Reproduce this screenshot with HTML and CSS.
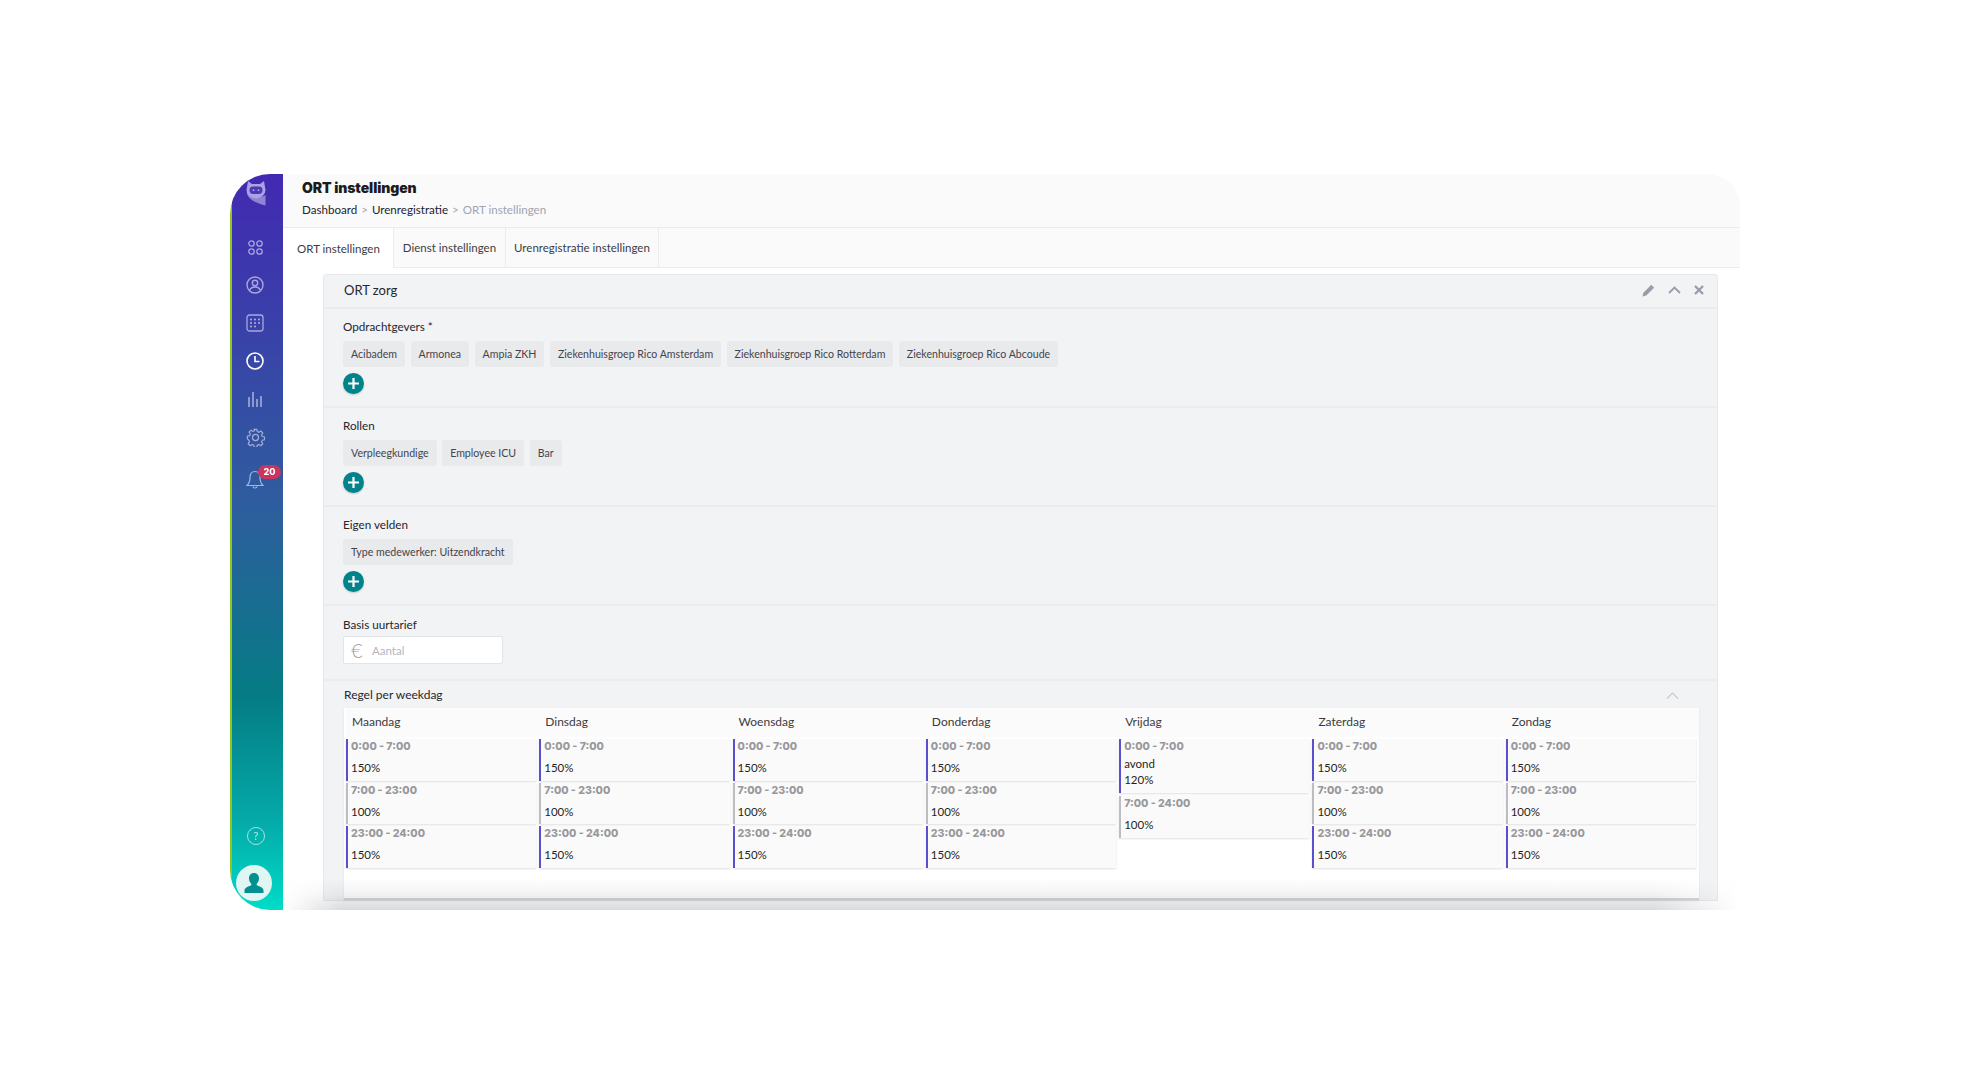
FILE: index.html
```html
<!DOCTYPE html>
<html lang="nl">
<head>
<meta charset="utf-8">
<title>ORT instellingen</title>
<link rel="stylesheet" href="styles.css">
</head>
<body>
<div class="app">
  <aside class="sidebar">
    <svg class="logo" width="24" height="26" viewBox="0 0 24 26">
      <path d="M2.500 12c1 7 9 11 19 13.500V15c-5 4-15 3-19-3z" fill="#8d84d6"/>
      <path d="M4 1l4 3h8l4-3 1.500 9a9.500 8.500 0 0 1-19 0z" fill="#aaa3e3"/>
      <rect x="5.500" y="6.500" width="13" height="7.500" rx="3.700" fill="#4a38b4"/>
      <circle cx="9.500" cy="10.200" r=".9" fill="#b5afe8"/><circle cx="14.500" cy="10.200" r=".9" fill="#b5afe8"/>
    </svg>
    <nav class="nav">
      <a class="nav-item"><svg width="15" height="15" viewBox="0 0 15 15" fill="none" stroke="#a9a6dc" stroke-width="1.300"><circle cx="3.500" cy="3.500" r="2.700"/><circle cx="11.500" cy="3.500" r="2.700"/><circle cx="3.500" cy="11.500" r="2.700"/><circle cx="11.500" cy="11.500" r="2.700"/></svg></a>
      <a class="nav-item"><svg width="18" height="18" viewBox="0 0 18 18" fill="none" stroke="#a9a6dc" stroke-width="1.400"><circle cx="9" cy="9" r="8"/><circle cx="9" cy="7" r="2.700"/><path d="M3.500 14.500c1-2.500 3-3.500 5.500-3.500s4.500 1 5.500 3.500"/></svg></a>
      <a class="nav-item"><svg width="18" height="18" viewBox="0 0 18 18" fill="none" stroke="#a9a6dc" stroke-width="1.300"><rect x="1" y="1" width="16" height="16" rx="2.500"/><g fill="#a9a6dc" stroke="none"><circle cx="5" cy="5.500" r="1.100"/><circle cx="9" cy="5.500" r="1.100"/><circle cx="13" cy="5.500" r="1.100"/><circle cx="5" cy="9" r="1.100"/><circle cx="9" cy="9" r="1.100"/><circle cx="13" cy="9" r="1.100"/><circle cx="5" cy="12.500" r="1.100"/><circle cx="9" cy="12.500" r="1.100"/></g></svg></a>
      <a class="nav-item"><svg width="18" height="18" viewBox="0 0 18 18" fill="none" stroke="#fff" stroke-width="1.600"><circle cx="9" cy="9" r="8"/><path d="M9 4v5.500h4.500"/></svg></a>
      <a class="nav-item"><svg width="16" height="16" viewBox="0 0 16 16" fill="#8f97cf"><rect x="1" y="6" width="2" height="10"/><rect x="5" y="1" width="2" height="15"/><rect x="9" y="8" width="2" height="8"/><rect x="13" y="5" width="2" height="11"/></svg></a>
      <a class="nav-item"><svg width="19" height="19" viewBox="0 0 20 20" fill="none" stroke="#a3afd8" stroke-width="1.300"><circle cx="10" cy="10" r="3.200"/><path d="M8.500 1h3l.5 2.500 1.800.8 2.200-1.400 2.100 2.100-1.400 2.200.8 1.800 2.500.5v3l-2.500.5-.8 1.800 1.400 2.200-2.100 2.100-2.200-1.400-1.800.8-.5 2.500h-3l-.5-2.500-1.800-.8-2.200 1.400-2.100-2.100 1.400-2.200-.8-1.800L1 11.500v-3l2.500-.5.800-1.800L2.900 4l2.100-2.100 2.200 1.400L9 2.500z" transform="translate(.5 .5) scale(.95)"/></svg></a>
      <a class="nav-item nav-bell"><svg width="18" height="20" viewBox="0 0 18 20" fill="none" stroke="#a3b8d6" stroke-width="1.200"><path d="M9 1.500c-3.500 0-5 2.700-5 6 0 4-1 6-3 8h16c-2-2-3-4-3-8 0-3.300-1.500-6-5-6z"/><path d="M7 16.500c0 2 4 2 4 0"/></svg><span class="badge">20</span></a>
    </nav>
    <div class="side-bottom">
      <span class="help">?</span>
      <span class="avatar"><svg width="22" height="22" viewBox="0 0 22 22" fill="#01908f"><path d="M11 1c-3 0-5 2.200-5 5.300 0 2.300 1 4.300 2.300 5.400v1.600C5 14.600 1.500 15.700 1.500 18.500V21h19v-2.500c0-2.800-3.500-3.900-6.800-5.200v-1.600C15 10.600 16 8.600 16 6.300 16 3.200 14 1 11 1z"/></svg></span>
    </div>
  </aside>
  <main class="main">
    <header class="topbar">
      <h1 class="title">ORT instellingen</h1>
      <p class="crumbs"><span>Dashboard</span> <i>&gt;</i> <span>Urenregistratie</span> <i>&gt;</i> <em>ORT instellingen</em></p>
    </header>
    <div class="tabs">
      <a class="tab tab-active">ORT instellingen</a>
      <a class="tab">Dienst instellingen</a>
      <a class="tab">Urenregistratie instellingen</a>
    </div>
    <section class="card">
      <div class="card-head">
        <span>ORT zorg</span>
        <div class="card-tools">
          <svg width="13" height="13" viewBox="0 0 12 12" fill="#9a9ca8"><path d="M8.600.8l2.600 2.600-7.300 7.300-3.500.9.900-3.500z"/></svg>
          <svg width="13" height="8" viewBox="0 0 13 8" fill="none" stroke="#9a9ca8" stroke-width="1.800"><path d="M1 7l5.500-5.500L12 7"/></svg>
          <svg width="10" height="10" viewBox="0 0 10 10" fill="none" stroke="#9a9ca8" stroke-width="2.400"><path d="M1 1l8 8M9 1l-8 8"/></svg>
        </div>
      </div>
      <div class="group">
        <div class="label">Opdrachtgevers *</div>
        <div class="chips"><span class="chip">Acibadem</span><span class="chip">Armonea</span><span class="chip">Ampia ZKH</span><span class="chip">Ziekenhuisgroep Rico Amsterdam</span><span class="chip">Ziekenhuisgroep Rico Rotterdam</span><span class="chip">Ziekenhuisgroep Rico Abcoude</span></div>
        <button class="add"><svg width="11" height="11" viewBox="0 0 11 11" fill="none" stroke="#fff" stroke-width="2.200"><path d="M5.500 0v11M0 5.500h11"/></svg></button>
      </div>
      <div class="group">
        <div class="label">Rollen</div>
        <div class="chips"><span class="chip">Verpleegkundige</span><span class="chip">Employee ICU</span><span class="chip">Bar</span></div>
        <button class="add"><svg width="11" height="11" viewBox="0 0 11 11" fill="none" stroke="#fff" stroke-width="2.200"><path d="M5.500 0v11M0 5.500h11"/></svg></button>
      </div>
      <div class="group">
        <div class="label">Eigen velden</div>
        <div class="chips"><span class="chip">Type medewerker: Uitzendkracht</span></div>
        <button class="add"><svg width="11" height="11" viewBox="0 0 11 11" fill="none" stroke="#fff" stroke-width="2.200"><path d="M5.500 0v11M0 5.500h11"/></svg></button>
      </div>
      <div class="group group-rate">
        <div class="label">Basis uurtarief</div>
        <div class="field"><span class="euro">€</span><span class="placeholder">Aantal</span></div>
      </div>
      <div class="rules">
        <div class="rules-head">
          <span>Regel per weekdag</span>
          <svg width="13" height="7" viewBox="0 0 13 7" fill="none" stroke="#c9cbd0" stroke-width="1.200"><path d="M1 6.500L6.500 1 12 6.500"/></svg>
        </div>
        <div class="week">
          <div class="day"><div class="day-name">Maandag</div><div class="slot slot-high"><b>0:00 - 7:00</b><span>150%</span></div><div class="slot"><b>7:00 - 23:00</b><span>100%</span></div><div class="slot slot-high"><b>23:00 - 24:00</b><span>150%</span></div></div>
          <div class="day"><div class="day-name">Dinsdag</div><div class="slot slot-high"><b>0:00 - 7:00</b><span>150%</span></div><div class="slot"><b>7:00 - 23:00</b><span>100%</span></div><div class="slot slot-high"><b>23:00 - 24:00</b><span>150%</span></div></div>
          <div class="day"><div class="day-name">Woensdag</div><div class="slot slot-high"><b>0:00 - 7:00</b><span>150%</span></div><div class="slot"><b>7:00 - 23:00</b><span>100%</span></div><div class="slot slot-high"><b>23:00 - 24:00</b><span>150%</span></div></div>
          <div class="day"><div class="day-name">Donderdag</div><div class="slot slot-high"><b>0:00 - 7:00</b><span>150%</span></div><div class="slot"><b>7:00 - 23:00</b><span>100%</span></div><div class="slot slot-high"><b>23:00 - 24:00</b><span>150%</span></div></div>
          <div class="day"><div class="day-name">Vrijdag</div><div class="slot slot-high slot-named"><b>0:00 - 7:00</b><small>avond</small><span>120%</span></div><div class="slot"><b>7:00 - 24:00</b><span>100%</span></div></div>
          <div class="day"><div class="day-name">Zaterdag</div><div class="slot slot-high"><b>0:00 - 7:00</b><span>150%</span></div><div class="slot"><b>7:00 - 23:00</b><span>100%</span></div><div class="slot slot-high"><b>23:00 - 24:00</b><span>150%</span></div></div>
          <div class="day"><div class="day-name">Zondag</div><div class="slot slot-high"><b>0:00 - 7:00</b><span>150%</span></div><div class="slot"><b>7:00 - 23:00</b><span>100%</span></div><div class="slot slot-high"><b>23:00 - 24:00</b><span>150%</span></div></div>
        </div>
      </div>
    </section>
    <div class="fade"></div>
  </main>
</div>
</body>
</html>
```
FILE: styles.css
```css
* { box-sizing: border-box; }
html, body { margin: 0; height: 100%; background: #fff; overflow: hidden; }
body { padding: 174px 0 0 230px; font-family: "Lato", "Liberation Sans", sans-serif; color: #2b2b30; }
.app { display: flex; width: 1510px; height: 736px; border-radius: 40px 32px 0 40px; overflow: hidden; background: #fff; filter: blur(.4px); }

.sidebar { flex: 0 0 53px; display: flex; flex-direction: column; align-items: center; padding: 6px 5px 9px 0; border-left: 2px solid #8ec81e; background: linear-gradient(180deg, #4229b2 0%, #2f5c9f 44%, #057c85 71%, #04aaa9 88%, #00dcc8 100%); }
.logo { display: block; flex: none; margin-left: 1px; }
.nav { display: flex; flex-direction: column; align-items: center; margin-top: 22px; }
.nav-item { position: relative; display: flex; align-items: center; justify-content: center; width: 40px; height: 38px; }
.nav-bell { margin-top: 5px; }
.badge { position: absolute; top: 4px; left: 23px; width: 23px; height: 14px; border-radius: 7px; background: #c8365f; color: #fff; font: 800 9px/14px "Inter", sans-serif; text-align: center; }
.side-bottom { display: flex; flex-direction: column; align-items: center; margin-top: auto; }
.help { width: 18px; height: 18px; margin: 0 0 20px 2px; border: 1.3px solid #a5e4e0; border-radius: 50%; color: #b5ebe6; font-size: 11px; line-height: 15px; text-align: center; }
.avatar { display: flex; align-items: center; justify-content: center; width: 36px; height: 36px; margin-left: -2px; border-radius: 50%; background: #e0f6f3; }

.main { position: relative; flex: 1; min-width: 0; background: #fff; }
.topbar { height: 54px; padding: 5px 0 0 19px; background: #fafafa; border-bottom: 1px solid #ececee; }
.title { margin: 0; font: 900 14px/17px "Inter", sans-serif; color: #1c1c20; letter-spacing: -.1px; }
.crumbs { margin: 6px 0 0; font-size: 11.600px; line-height: 15px; color: #23232a; }
.crumbs i { font-style: normal; color: #a6a8b5; margin: 0 1px; }
.crumbs em { font-style: normal; color: #a0a2b4; }
.tabs { display: flex; height: 40px; background: #fafafa; border-bottom: 1px solid #ececee; }
.tab { display: flex; align-items: center; padding: 0 8.500px; border-right: 1px solid #ececee; font-size: 11.500px; color: #3c3c44; }
.tab-active { height: 40px; padding: 1px 13.500px 0 14px; background: #fff; }
.tab:not(.tab-active) { height: 39px; }

.card { margin: 6px 22px 0 40px; background: #f2f3f5; border: 1px solid #e8e9ec; border-radius: 3px 3px 0 0; }
.card-head { display: flex; align-items: center; justify-content: space-between; height: 34px; padding: 0 13px 2px 20px; border-bottom: 2px solid #ebecee; font-size: 13px; color: #26262c; }
.card-tools { display: flex; align-items: center; gap: 13px; }
.group { padding: 10px 19px 12px; border-bottom: 2px solid #ebecee; }
.group-rate { padding: 11px 19px 15px; }
.label { font-size: 11.700px; line-height: 14px; color: #26262c; }
.chips { display: flex; gap: 5.500px; margin-top: 8px; }
.chip { height: 26px; padding: 0 8px; border-radius: 3px; background: #e9eaec; font-size: 10.600px; line-height: 26px; color: #44444c; }
.add { display: flex; align-items: center; justify-content: center; width: 21px; height: 21px; margin-top: 6px; padding: 0; border: 0; border-radius: 50%; background: #00838a; box-shadow: 0 1px 2px rgba(0,0,0,.2); }
.field { display: flex; align-items: center; width: 160px; height: 28px; margin-top: 5px; padding-left: 7px; background: #fff; border: 1px solid #e3e4e8; border-radius: 2px; }
.euro { width: 21px; color: #9b9ba0; font-size: 20px; font-weight: 300; line-height: 26px; }
.placeholder { font-size: 11.500px; color: #b4b6c3; }

.rules { padding: 7px 18px 0 20px; }
.rules-head { display: flex; align-items: center; justify-content: space-between; height: 14px; padding-right: 20px; font-size: 12px; line-height: 14px; color: #26262c; }
.week { display: grid; grid-template-columns: repeat(7, 1fr); height: 191.500px; margin-top: 6px; padding-left: 2px; background: #fff; border-bottom: 2px solid #d5d6d9; box-shadow: 0 1px 2px rgba(0,0,0,.08); }
.day { display: flex; flex-direction: column; gap: 2px; }
.day-name { height: 29px; padding-left: 6px; background: #fbfbfb; font-size: 12px; line-height: 27px; color: #3a3a40; }
.slot { display: flex; flex-direction: column; height: 41.500px; margin-right: 3px; padding-left: 3px; border-left: 2px solid #bcbcc2; background: #fafafa; box-shadow: 0 1px 2px rgba(0,0,0,.13); }
.slot-high { border-left-color: #5a4fcf; }
.slot-named { height: 54px; margin-bottom: 1px; }
.slot b { font: 800 10.600px/16px "Inter", sans-serif; color: #98989c; }
.slot span { margin-top: 5px; font-size: 11.500px; line-height: 16px; color: #1f1f24; }
.slot small { font-size: 11.500px; line-height: 16px; margin-top: 1px; color: #1f1f24; }
.slot small + span { margin-top: 0; }

.fade { position: absolute; right: 0; bottom: 0; left: 0; height: 32px; background: linear-gradient(180deg, rgba(110,114,120,0) 0%, rgba(110,114,120,.08) 45%, rgba(110,114,120,.26) 100%); -webkit-mask-image: linear-gradient(90deg, transparent 0, #000 4%, #000 94%, transparent 100%); mask-image: linear-gradient(90deg, transparent 0, #000 4%, #000 94%, transparent 100%); }
```
